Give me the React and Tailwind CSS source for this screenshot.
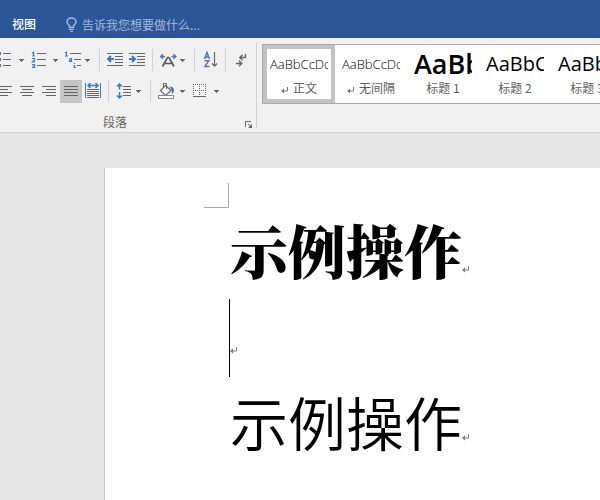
import React from 'react'

const GRAY = '#666666'
const BLUE = '#3f7ab8'

// Each icon keeps the ribbon's own coordinates, so the view box starts at the button's left edge
function Tool({ label, box, className, active, children }) {
    return (
        <button
            type="button"
            aria-label={label}
            aria-pressed={active}
            className={`h-[23px] shrink-0 ${active ? 'bg-[#c5c5c5]' : ''} ${className}`}
        >
            <svg viewBox={box} className="block h-full w-full" fill="none">
                {children}
            </svg>
        </button>
    )
}

function Divider() {
    return <span className="h-[22px] w-px shrink-0 bg-[#d2d2d2]"></span>
}

function Caret({ x, y }) {
    return <path d={`M${x} ${y}h5v1h-1v1h-1v1h-1v-1h-1v-1h-1z`} fill={GRAY} />
}

function Lines({ rows }) {
    return rows.map(([x1, x2, y]) => (
        <rect key={`${x1}-${y}`} x={x1} y={y} width={x2 - x1} height="1" fill={GRAY} />
    ))
}

// Little 1, 2, 3 markers drawn on a 3x4 pixel grid
function Marker({ d }) {
    return <path d={d} stroke={BLUE} strokeWidth="1.200" />
}

function ReturnMark({ className }) {
    return (
        <svg viewBox="0 0 8 8" className={`h-2 w-2 shrink-0 ${className}`} fill="none" aria-hidden="true">
            <path d="M6.500 1v4H1" stroke="#7a7a7a" />
            <path d="M0 5l3-2.500v5z" fill="#7a7a7a" />
        </svg>
    )
}

function Header() {
    return (
        <header className="flex h-[38px] items-end bg-[#2b579a] pb-1 text-xs">
            <button type="button" className="ml-3 h-5 font-medium text-white">视图</button>
            <label className="ml-[30px] flex h-5 flex-1 items-center gap-[5px]">
                <svg viewBox="0 0 11 15" className="h-[15px] w-[11px] shrink-0" fill="none">
                    <path d="M3.5 10.5v-2C2 7.5 1 6.300 1 5a4.500 4 0 0 1 9 0c0 1.300-1 2.500-2.500 3.500v2z" stroke="#a9bcd8" strokeWidth="1.500" />
                    <path d="M3 12.500h5M4 14.300h3" stroke="#a9bcd8" />
                </svg>
                <span className="sr-only">搜索</span>
                <input
                    type="text"
                    placeholder="告诉我您想要做什么..."
                    className="h-5 w-full bg-transparent text-xs outline-none placeholder:text-[#a3b8d6]"
                />
            </label>
        </header>
    )
}

function ParagraphGroup() {
    return (
        <section className="w-[256px] shrink-0">
            <div className="flex">
                <Tool label="项目符号" box="0 49 28 23" className="w-7">
                    <path d="M0 52h1v3h-1zM0 58h1v3h-1zM0 64h1v3h-1z" fill={BLUE} />
                    <Lines rows={[[3, 11, 53], [3, 11, 59], [3, 11, 65]]} />
                    <Caret x={19} y={59} />
                </Tool>
                <Tool label="编号" box="28 49 34 23" className="w-[34px]">
                    <Marker d="M32 53l1.500-.8v4M32 56h3" />
                    <Marker d="M32 58.500h2.500v1.500l-2 1.800H35" />
                    <Marker d="M32 64.500h2.500v3H32M32.500 66h2" />
                    <Lines rows={[[37, 46, 53], [37, 46, 59], [37, 46, 65]]} />
                    <Caret x={53} y={59} />
                </Tool>
                <Tool label="多级列表" box="62 49 37 23" className="w-[37px]">
                    <Marker d="M65 53l1.500-.8v4M65 56h3" />
                    <Marker d="M69.500 58.500h2V62M71.500 60h-2v1.500h2.500" />
                    <Marker d="M74.500 63v1M73.500 65.500h1V68M73.500 67.500h2.500" />
                    <Lines rows={[[70, 81, 53], [74, 81, 59], [77, 81, 65]]} />
                    <Caret x={85} y={59} />
                </Tool>
                <Divider />
                <Tool label="减少缩进量" box="100 49 26 23" className="w-[26px]">
                    <Lines rows={[[107, 123, 53], [115, 123, 56], [115, 123, 59], [115, 123, 62], [107, 123, 65]]} />
                    <path d="M114 59H108.500M111 56L108 59 111 62" stroke={BLUE} strokeWidth="2" />
                </Tool>
                <Tool label="增加缩进量" box="126 49 26 23" className="w-[26px]">
                    <Lines rows={[[129, 145, 53], [137, 145, 56], [137, 145, 59], [137, 145, 62], [129, 145, 65]]} />
                    <path d="M129 59h5.500M132 56l3 3-3 3" stroke={BLUE} strokeWidth="2" />
                </Tool>
                <Divider />
                <Tool label="中文版式" box="153 49 41 23" className="w-[41px]">
                    <path d="M162.500 66.500l5-9h1.500l5 9M164.500 63.500h7.500" stroke="#595959" strokeWidth="1.700" />
                    <path d="M165 56.500h-4M163 54.200l-2.300 2.300 2.300 2.300M171.500 56.500h4M173.500 54.200l2.300 2.300-2.300 2.300" stroke={BLUE} strokeWidth="1.500" />
                    <Caret x={180} y={59} />
                </Tool>
                <Divider />
                <Tool label="排序" box="195 49 30 23" className="w-[30px]">
                    <path d="M204.500 59l2.500-6.500 2.500 6.500M205.300 57h3.500" stroke={BLUE} strokeWidth="1.500" />
                    <path d="M204.500 60.700h4.300l-4 5.800h4.700" stroke="#9358b5" strokeWidth="1.400" />
                    <path d="M214.500 52v14.500M212 63.500l2.500 2.700 2.500-2.700" stroke={GRAY} strokeWidth="1.200" />
                </Tool>
                <Divider />
                <Tool label="显示编辑标记" box="226 49 26 23" className="w-[26px]">
                    <path d="M245.500 54v3.500H240M242.500 54.800l-2.700 2.700 2.700 2.700M236 63.500h5M239 60.800l2.700 2.700-2.700 2.700" stroke={GRAY} strokeWidth="1.400" />
                </Tool>
            </div>

            <div className="mt-2 flex">
                <Tool label="左对齐" box="0 80 16 23" className="w-4">
                    <Lines rows={[[0, 12, 86], [0, 8, 89], [0, 12, 92], [0, 8, 95]]} />
                </Tool>
                <Tool label="居中" box="16 80 22 23" className="w-[22px]">
                    <Lines rows={[[20, 34, 86], [22, 32, 89], [20, 34, 92], [22, 32, 95]]} />
                </Tool>
                <Tool label="右对齐" box="38 80 22 23" className="w-[22px]">
                    <Lines rows={[[42, 56, 86], [46, 56, 89], [42, 56, 92], [46, 56, 95]]} />
                </Tool>
                <Tool label="两端对齐" box="60 80 22 23" className="w-[22px]" active>
                    <Lines rows={[[64, 78, 86], [64, 78, 89], [64, 78, 92], [64, 78, 95]]} />
                </Tool>
                <Tool label="分散对齐" box="82 80 26 23" className="w-[26px]">
                    <path d="M85.500 83v15M100.500 83v15" stroke={BLUE} />
                    <path d="M88 85.500h10M90.500 83l-2.500 2.500 2.500 2.500M95.500 83l2.500 2.500-2.500 2.500" stroke={BLUE} strokeWidth="1.500" />
                    <Lines rows={[[87, 99, 89], [87, 99, 91], [87, 99, 93], [87, 99, 95], [87, 99, 97]]} />
                </Tool>
                <Divider />
                <Tool label="行和段落间距" box="109 80 41 23" className="w-[41px]">
                    <path d="M119.500 84v5.500M119.500 92v6M117 86.500l2.500-2.500 2.500 2.500M117 95.500l2.500 2.500 2.500-2.500" stroke={BLUE} strokeWidth="1.500" />
                    <Lines rows={[[123, 131, 86], [123, 131, 89], [123, 131, 92], [123, 131, 95]]} />
                    <Caret x={136} y={90} />
                </Tool>
                <Divider />
                <Tool label="底纹" box="151 80 37 23" className="w-[37px]">
                    <path d="M165.500 85.500l5.500 5-5.500 5-5-5z" fill="#fff" stroke={GRAY} strokeWidth="1.200" />
                    <path d="M163.500 88v-4.500h3v5.500" stroke={GRAY} />
                    <path d="M169.500 86.500c3 0 4.500 1.500 4.500 4 0 1.500-1 3-2.500 3.500 1-2 .5-4.500-2-7.500z" fill={BLUE} />
                    <rect x="158.500" y="95.500" width="15" height="3" fill="#fff" stroke="#8a8a8a" />
                    <Caret x={180} y={90} />
                </Tool>
                <Tool label="边框" box="188 80 36 23" className="w-9">
                    <rect x="193" y="84" width="13" height="12" fill="#fff" />
                    <path d="M193 84.500h13M193 90.500h13M193.500 84v12M199.500 84v12M205.500 84v12" stroke={GRAY} strokeDasharray="1 1" />
                    <path d="M193 96.500h13" stroke={GRAY} />
                    <Caret x={214} y={90} />
                </Tool>
            </div>

            <div className="mt-2.5 flex h-[18px] items-center justify-between pr-1 text-xs text-[#666666]">
                <span className="ml-[103px]">段落</span>
                <button type="button" aria-label="段落设置">
                    <svg viewBox="0 0 7 7" className="mt-1 block h-[7px] w-[7px]" fill="none">
                        <path d="M6 .5H.5V6M3 3l3 3" stroke={GRAY} />
                        <path d="M7 3v4H3z" fill={GRAY} />
                    </svg>
                </button>
            </div>
        </section>
    )
}

const styles = [
    { name: '正文', sample: 'AaBbCcDd', size: 'text-[13px] font-light', mark: true, selected: true },
    { name: '无间隔', sample: 'AaBbCcDd', size: 'text-[13px] font-light', mark: true },
    { name: '标题 1', sample: 'AaBb', size: 'text-[27px] font-semibold' },
    { name: '标题 2', sample: 'AaBbC', size: 'text-[20px]' },
    { name: '标题 3', sample: 'AaBbC', size: 'text-[20px]' },
]

function StyleGallery() {
    return (
        <div className="-mt-[5px] ml-[5px] flex h-[60px] min-w-0 flex-1 overflow-hidden border border-r-0 border-[#ababab] bg-white">
            {styles.map((s) => (
                <button
                    type="button"
                    key={s.name}
                    className={`flex h-[58px] w-[72px] shrink-0 flex-col items-center border-4 ${s.selected ? 'border-[#c3c3c3]' : 'border-transparent'}`}
                >
                    <span className="flex h-[30px] w-[58px] items-center overflow-hidden">
                        <span className={`whitespace-nowrap font-['Open_Sans','Noto_Sans',sans-serif] leading-7 text-black ${s.size}`}>
                            {s.sample}
                        </span>
                    </span>
                    <span className="flex items-center gap-1 whitespace-nowrap text-xs leading-[18px] text-[#606060]">
                        {s.mark && <ReturnMark className="mt-1" />}
                        {s.name}
                    </span>
                </button>
            ))}
        </div>
    )
}

function Page() {
    return (
        <article className="flex-1 border-l border-[#c8c8c8] bg-white pt-[15px] text-[58px] leading-[80px] text-black">
            <div className="mb-px ml-[99px] h-[25px] w-[25px] border-b border-r border-[#ababab]"></div>
            <p className="ml-[125px] flex items-center whitespace-nowrap pb-1.5 font-['Noto_Serif_CJK_SC','Noto_Sans_CJK_SC',serif] font-black">
                示例操作
                <ReturnMark className="mt-10" />
            </p>
            <div className="ml-[124px] flex h-[86px] items-center">
                <span className="h-[78px] w-px bg-black"></span>
                <ReturnMark className="mt-6" />
            </div>
            <p className="ml-[125px] flex items-center whitespace-nowrap pb-1.5 font-[350]">
                示例操作
                <ReturnMark className="mt-8" />
            </p>
        </article>
    )
}

export default function App() {
    return (
        <div className="flex min-h-screen flex-col bg-[#e6e6e6] font-['Noto_Sans_CJK_SC',sans-serif]">
            <Header />
            <div className="flex h-[95px] border-b border-[#d2d2d2] bg-[#f1f1f1] pt-[11px]">
                <ParagraphGroup />
                <span className="-mt-[7px] h-[86px] w-px shrink-0 bg-[#d2d2d2]"></span>
                <StyleGallery />
            </div>
            <main className="flex flex-1 pl-[104px] pt-[35px]">
                <Page />
            </main>
        </div>
    )
}
